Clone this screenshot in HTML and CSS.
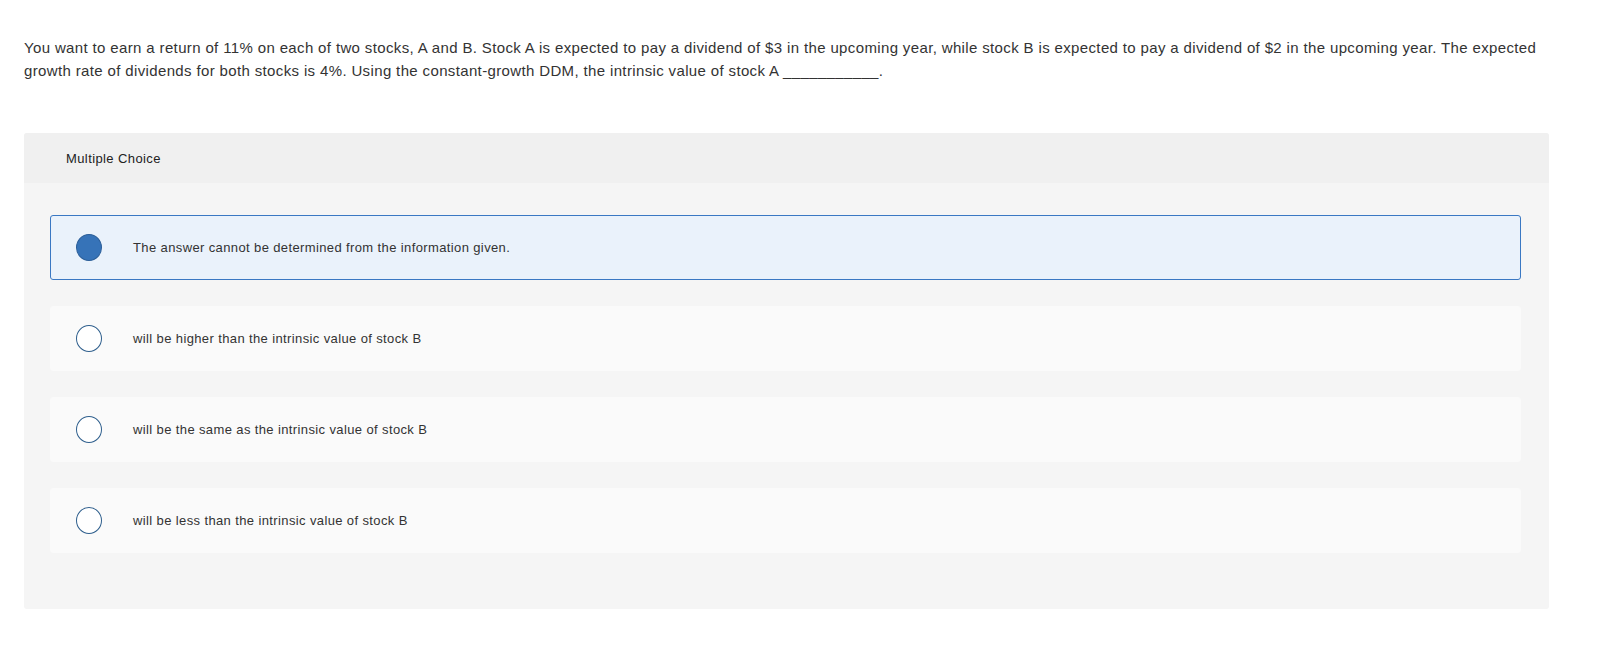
FILE: index.html
```html
<!DOCTYPE html>
<html>
<head>
<meta charset="utf-8">
<link rel="stylesheet" href="styles.css">
</head>
<body>
<div class="page">
  <p class="question">You want to earn a return of 11% on each of two stocks, A and B. Stock A is expected to pay a dividend of $3 in the upcoming year, while stock B is expected to pay a dividend of $2 in the upcoming year. The expected growth rate of dividends for both stocks is 4%. Using the constant-growth DDM, the intrinsic value of stock A ___________.</p>
  <div class="panel">
    <div class="panel-head">Multiple Choice</div>
    <div class="panel-body">
      <div class="option selected"><span class="radio"></span><span class="label">The answer cannot be determined from the information given.</span></div>
      <div class="option"><span class="radio"></span><span class="label">will be higher than the intrinsic value of stock B</span></div>
      <div class="option"><span class="radio"></span><span class="label">will be the same as the intrinsic value of stock B</span></div>
      <div class="option"><span class="radio"></span><span class="label">will be less than the intrinsic value of stock B</span></div>
    </div>
  </div>
</div>
</body>
</html>
```

FILE: styles.css
```css
html, body {
  margin: 0;
  padding: 0;
  background: #ffffff;
}
body {
  font-family: "Liberation Sans", Arial, sans-serif;
  color: #333333;
}
.page {
  padding: 37px 61px 0 24px;
}
.question {
  margin: 0;
  font-size: 15px;
  letter-spacing: 0.36px;
  line-height: 22.5px;
  color: #333333;
}
.panel {
  margin-top: 51px;
  background: #f5f5f5;
  border-radius: 3px;
}
.panel-head {
  height: 50px;
  display: flex;
  align-items: center;
  padding-left: 42px;
  background: #f0f0f0;
  border-radius: 3px 3px 0 0;
  font-size: 13px;
  letter-spacing: 0.4px;
  color: #222;
}
.panel-body {
  padding: 32px 28px 56px 26px;
  display: flex;
  flex-direction: column;
  gap: 26px;
}
.option {
  height: 65px;
  box-sizing: border-box;
  display: flex;
  align-items: center;
  padding-left: 25px;
  background: #fafafa;
  border: 1px solid #fafafa;
  border-radius: 3px;
}
.option.selected {
  background: #eaf2fb;
  border-color: #3a78c3;
}
.radio {
  width: 26px;
  height: 27px;
  box-sizing: border-box;
  border: 1.5px solid #2f5f8d;
  border-radius: 50%;
  background: #ffffff;
  flex: none;
}
.option.selected .radio {
  background: #3673b8;
  border-color: #2b5e98;
}
.label {
  margin-left: 31px;
  font-size: 13px;
  letter-spacing: 0.38px;
  color: #333;
}
```
